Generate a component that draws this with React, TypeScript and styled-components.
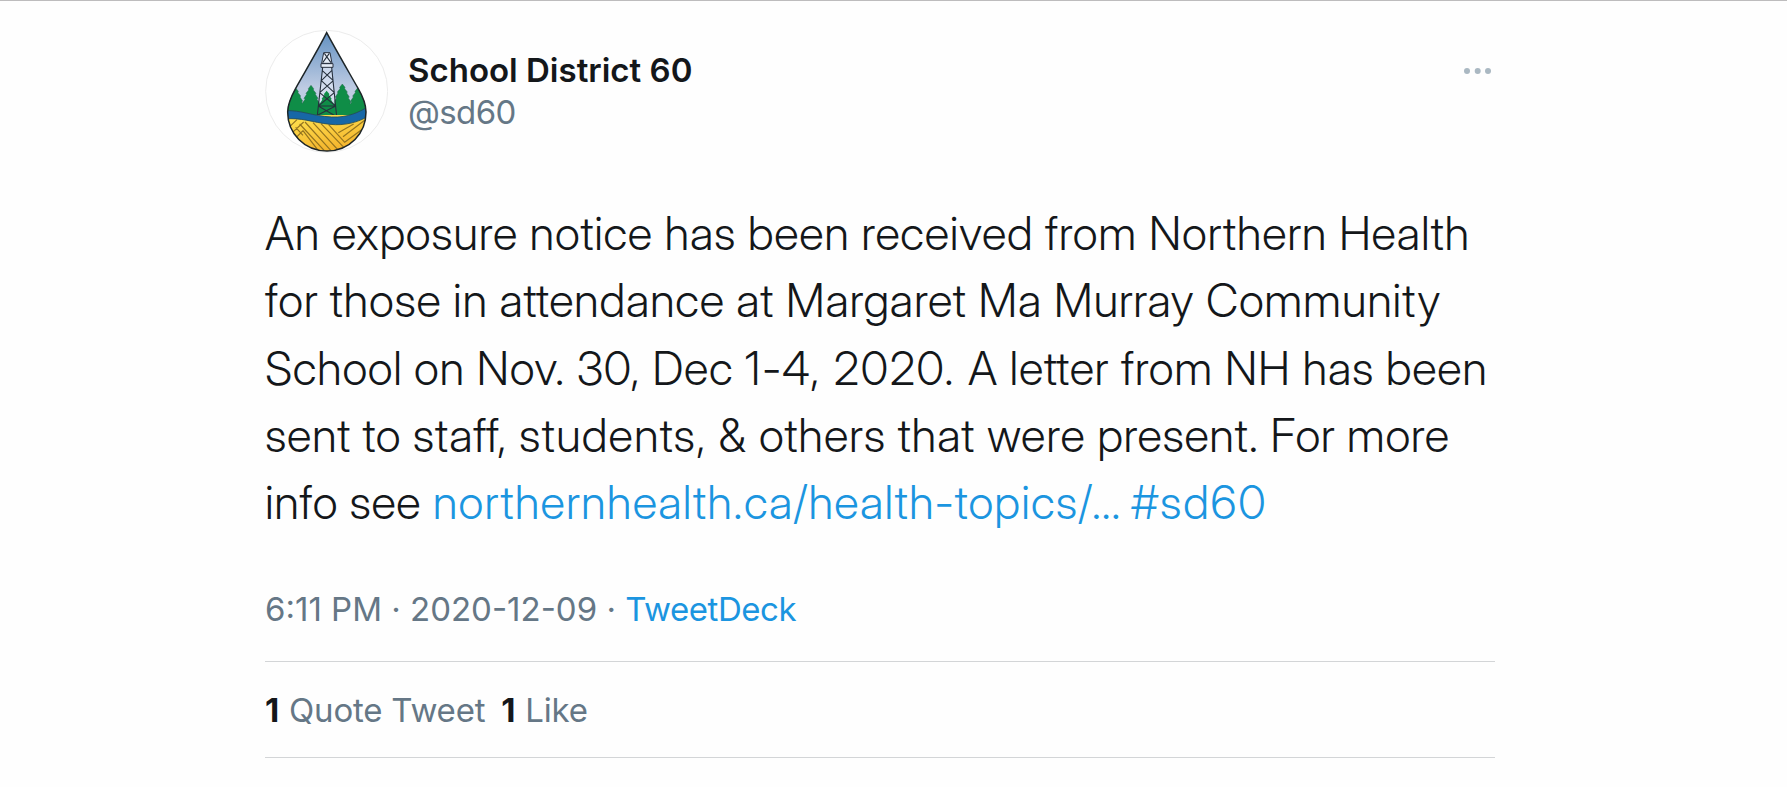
import React from "react";
import styled, { createGlobalStyle } from "styled-components";

const Global = createGlobalStyle`
  *{box-sizing:border-box}
  body{margin:0;background:#fefefe;font-family:Inter,"Liberation Sans",sans-serif;color:#14171a}
`;
const Page = styled.main`height:787px;overflow:hidden;border-top:1px solid #bdbcbd;padding:29px 0 0 265px;`;
const Tweet = styled.article`width:1230px;`;
const Header = styled.header`display:flex;height:123px;`;
const Avatar = styled.svg`width:123px;height:123px;flex:none;`;
const Names = styled.div`flex:1;padding:19px 0 0 20px;font-size:33px;line-height:42px;white-space:nowrap;`;
const Name = styled.div`font-weight:600;`;
const Handle = styled.div`color:#657786;letter-spacing:-0.6px;`;
const More = styled.svg`width:30px;height:10px;margin:36px 2px 0 0;`;
const Body = styled.p`margin:47px 0 0;font-family:"Inter Display",Inter,sans-serif;font-size:46px;font-weight:300;line-height:67.25px;`;
const Line = styled.span<{ $ls: number }>`display:block;white-space:nowrap;letter-spacing:${p => p.$ls}px;`;
const Run = styled.span<{ $ls: number }>`letter-spacing:${p => p.$ls}px;`;
const Plain = styled.span`font-variant-ligatures:none;`;
const Link = styled.a<{ $ls?: number }>`color:#1b95e0;letter-spacing:${p => (p.$ls === undefined ? "inherit" : `${p.$ls}px`)};`;
const Meta = styled.div`margin-top:51px;height:74px;font-size:33px;line-height:44px;color:#657786;`;
const Stats = styled.div`height:97px;border:solid #d3d5d7;border-width:1px 0;display:flex;align-items:center;font-size:33px;color:#657786;gap:16px;`;
const Stat = styled.span`letter-spacing:-0.2px;`;
const Count = styled.b`font-weight:700;color:#14171a;margin-right:10px;`;

const DROP = "M215 38C190 88 150 155 122 205C106 234 98 254 98 276C98 340 148 393 216 393C284 393 333 340 333 276C333 252 324 230 308 203C279 152 240 85 215 38Z";
const tree = (x: number, y: number) =>
  `M${x} ${y - 8}l8 10l-1 4l8 10l-2 3l8 12l-3 3l8 12l-3 4l7 45h-60l7-45l-3-4l8-12l-3-3l8-12l-2-3l8-10l-1-4Z`;

function Logo() {
  return (
    <Avatar viewBox="30 30 369 369">
      <defs>
        <linearGradient id="sky" x1="0" y1="0" x2="0" y2="1"><stop offset="0" stopColor="#5f8fc0"/><stop offset=".65" stopColor="#bfcce3"/></linearGradient>
        <linearGradient id="field" x1="0" y1="0" x2=".4" y2="1"><stop offset="0" stopColor="#ffe552"/><stop offset="1" stopColor="#f4b32c"/></linearGradient>
        <clipPath id="drop"><path d={DROP}/></clipPath>
      </defs>
      <circle cx="215" cy="214" r="183" fill="#fff" stroke="#ececec" strokeWidth="3"/>
      <g clipPath="url(#drop)">
        <rect x="90" y="30" width="250" height="270" fill="url(#sky)"/>
        <g fill="#0f8d47" stroke="#2b6b51" strokeWidth="1.5">
          {[[122, 212], [168, 204], [262, 200], [308, 212]].map(([x, y]) => <path key={x} d={tree(x, y)}/>)}
        </g>
        <path fill="#0f8d47" d="M90 252H340V300H90Z"/>
        <path d="M204 141L193 248H239L229 141Z" fill="#dbe3f2" opacity=".75"/>
        <path fill="#0f8d47" d={tree(215, 220)}/>
        <path d="M206 98H225L231 130H200ZM198 131H234V142H198Z" fill="#e6edf7" stroke="#2a3240" strokeWidth="3"/>
        <path d="M208 100L228 128M223 100L203 128M203 142L187 286M230 142L245 290M202 152L235 182M230 152L199 182M199 182L238 218M235 182L194 218M194 218L242 258M238 218L190 258M190 258L245 290M242 258L187 286M190 258H242" fill="none" stroke="#26303c" strokeWidth="3.2"/>
        <rect x="90" y="285" width="250" height="115" fill="url(#field)"/>
        <path d="M150 306L230 394M174 308L251 392M198 311L270 386M221 314L270 368M134 312L208 392M104 320L126 299M112 338L146 306M120 356L144 332M144 332L190 392M122 322L144 346M264 350L330 300M250 338L296 312M270 366L330 322" fill="none" stroke="#94741f" strokeWidth="3.6"/>
        <path d="M90 272C140 270 170 288 230 291C280 293 310 277 340 260V289C310 306 270 318 225 313C170 307 140 292 90 297Z" fill="#1767a6" stroke="#254c55" strokeWidth="2.5"/>
      </g>
      <path d={DROP} fill="none" stroke="#1d2528" strokeWidth="4.5"/>
    </Avatar>
  );
}

export default function App() {
  return (
    <Page><Global />
      <Tweet>
        <Header>
          <Logo />
          <Names><Name>School District 60</Name><Handle>@sd60</Handle></Names>
          <More viewBox="0 0 30 10" fill="#aab8c2"><circle cx="4" cy="5" r="3"/><circle cx="14.7" cy="5" r="3"/><circle cx="25" cy="5" r="3"/></More>
        </Header>
        <Body>
          <Line $ls={0.68}>An exposure notice has been received from Northern Health</Line>
          <Line $ls={0.65}>for those in <Plain>attendance</Plain> at Margaret Ma Murray Community</Line>
          <Line $ls={0.6}>School on Nov. 30, Dec <Run $ls={1.55}>1-4, 2020. </Run><Run $ls={0.7}>A <Plain>letter</Plain> from NH has been</Run></Line>
          <Line $ls={0.6}>sent to staff, <Run $ls={1.08}>students, &amp; </Run><Run $ls={0.8}>others that were </Run>present. For more</Line>
          <Line $ls={0.55}>info see <Link $ls={1.1}>northernhealth.ca/health-topics/…</Link><Run $ls={-1.6}> </Run><Link $ls={1.7}>#sd60</Link></Line>
        </Body>
        <Meta>6:11 PM · 2020-12-09 · <Link $ls={-0.45}>TweetDeck</Link></Meta>
        <Stats><Stat><Count>1</Count>Quote Tweet</Stat><Stat><Count>1</Count>Like</Stat></Stats>
      </Tweet>
    </Page>
  );
}
